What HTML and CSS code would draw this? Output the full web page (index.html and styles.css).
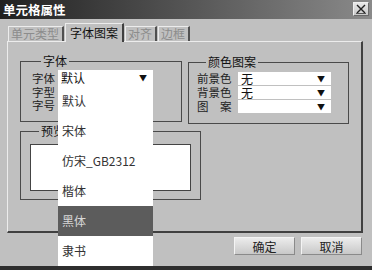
FILE: index.html
```html
<!DOCTYPE html>
<html lang="zh-CN">
<head>
  <meta charset="UTF-8">
  <title>单元格属性</title>
  <link rel="stylesheet" href="styles.css">
</head>
<body>
  <div class="window">
    <div class="titlebar">
      <span class="title">单元格属性</span>
      <span class="close">
        <svg width="14" height="12" viewBox="0 0 14 12">
          <path d="M3 2 L11 10 M11 2 L3 10" stroke="#222" stroke-width="1.4" fill="none"/>
          <path d="M2 10.5 H12" stroke="#555" stroke-width="1"/>
        </svg>
      </span>
    </div>

    <div class="tabs">
      <div class="tab">单元类型</div>
      <div class="tab active">字体图案</div>
      <div class="tab">对齐</div>
      <div class="tab">边框</div>
    </div>

    <div class="panel">
      <div class="top-row">
        <fieldset class="group font-group">
          <legend>字体</legend>
          <div class="field first">
            <label>字体</label>
            <div class="select">默认<span class="arrow">▼</span>
              <ul class="dropdown">
                <li>默认</li>
                <li>宋体</li>
                <li>仿宋_GB2312</li>
                <li>楷体</li>
                <li class="selected">黑体</li>
                <li>隶书</li>
              </ul>
            </div>
          </div>
          <div class="field"><label>字型</label></div>
          <div class="field"><label>字号</label></div>
        </fieldset>

        <fieldset class="group color-group">
          <legend>颜色图案</legend>
          <div class="field">
            <label>前景色</label>
            <div class="select">无<span class="arrow">▼</span></div>
          </div>
          <div class="field">
            <label>背景色</label>
            <div class="select">无<span class="arrow">▼</span></div>
          </div>
          <div class="field">
            <label>图　案</label>
            <div class="select"><span class="arrow">▼</span></div>
          </div>
        </fieldset>
      </div>

      <fieldset class="group preview-group">
        <legend>预览</legend>
        <div class="preview-box"></div>
      </fieldset>
    </div>

    <div class="buttons">
      <button>确定</button>
      <button>取消</button>
    </div>
    <div class="bottom-edge"></div>
  </div>
</body>
</html>
```

FILE: styles.css
```css
body {
  margin: 0;
  font-family: "Noto Sans CJK SC", "Liberation Sans", sans-serif;
  font-size: 12px;
  color: #111;
}
.window {
  width: 372px;
  height: 270px;
  background-color: #c0c0c0;
  display: flex;
  flex-direction: column;
  overflow: hidden;
}
.titlebar {
  height: 19px;
  flex: none;
  display: flex;
  align-items: center;
  justify-content: space-between;
  padding: 0 3px 0 3px;
  background: linear-gradient(to right, #202020, #5a5a5a 55%, #8a8a8a);
  box-sizing: border-box;
}
.title {
  color: #fff;
  font-weight: bold;
  font-size: 12.5px;
  line-height: 19px;
}
.close {
  width: 16px;
  height: 14px;
  box-sizing: border-box;
  border: 1px solid #6a6a6a;
  border-top-color: #f0f0f0;
  border-left-color: #f0f0f0;
  background: linear-gradient(#e8e8e8, #c8c8c8);
  display: flex;
  align-items: center;
  justify-content: center;
  margin-top: -2px;
}
.tabs {
  height: 22px;
  flex: none;
  display: flex;
  align-items: flex-end;
  padding-left: 8px;
  position: relative;
  z-index: 1;
}
.tab {
  height: 14px;
  line-height: 14px;
  padding: 0 3px 0 2px;
  color: #8c8c8c;
  border-top: 1px solid #ececec;
  border-left: 1px solid #ececec;
  border-right: 2px solid #505050;
  margin-right: 1px;
}
.tab.active {
  height: 18px;
  line-height: 18px;
  color: #111;
  padding: 0 4px 0 4px;
  margin-bottom: -1px;
  background-color: #c0c0c0;
  border-right: 2px solid #404040;
}
.panel {
  width: 356px;
  height: 192px;
  flex: none;
  margin-left: 7px;
  box-sizing: border-box;
  border-top: 1px solid #ececec;
  border-left: 1px solid #ececec;
  border-right: 2px solid #404040;
  border-bottom: 2px solid #404040;
  padding: 12px 0 0 12px;
}
.top-row {
  display: flex;
  gap: 6px;
  align-items: flex-start;
}
.group {
  margin: 0;
  padding: 0;
  border: 1px solid #4a4a4a;
  box-sizing: border-box;
  min-width: 0;
}
.group legend {
  margin-left: 9px;
  padding: 0 2px;
  line-height: 14px;
  font-size: 12px;
}
.font-group {
  width: 162px;
  height: 68px;
  padding: 2px 0 0 11px;
}
.color-group {
  width: 161px;
  height: 69px;
  margin-top: 1px;
  padding: 2px 0 0 8px;
}
.field {
  display: flex;
  align-items: center;
  height: 13px;
  line-height: 12px;
}
.field label {
  font-size: 11.5px;
  line-height: 12px;
  color: #222;
}
.font-group .field.first {
  height: 15px;
}
.font-group label {
  width: 26px;
}
.color-group .field {
  height: 14px;
}
.color-group label {
  width: 41px;
}
.select {
  position: relative;
  background-color: #fff;
  box-sizing: border-box;
  height: 13px;
  line-height: 13px;
  padding-left: 3px;
}
.font-group .select {
  width: 95px;
  height: 15px;
  line-height: 15px;
}
.color-group .select {
  width: 93px;
}
.arrow {
  position: absolute;
  right: 6px;
  top: 0;
  font-size: 8px;
}
.dropdown {
  position: absolute;
  left: 0;
  top: 15px;
  width: 95px;
  height: 181px;
  margin: 0;
  padding: 1px 0 0 0;
  list-style: none;
  background-color: #fff;
  box-sizing: border-box;
  z-index: 5;
}
.dropdown li {
  height: 30px;
  line-height: 30px;
  padding-left: 4px;
  font-size: 12px;
  color: #333;
}
.dropdown li.selected {
  background-color: #5c5c5c;
  color: #d8d8d8;
}
.preview-group {
  width: 181px;
  height: 76px;
  padding: 6px 0 0 9px;
}
.preview-box {
  width: 161px;
  height: 47px;
  box-sizing: border-box;
  background-color: #fff;
  border: 1px solid #444;
}
.buttons {
  display: flex;
  justify-content: flex-end;
  gap: 6px;
  padding-right: 10px;
  margin-top: 4px;
}
.buttons button {
  width: 61px;
  height: 18px;
  padding: 0;
  font-family: inherit;
  font-size: 12px;
  color: #222;
  background: linear-gradient(#ececec, #c8c8c8);
  border: 1px solid #8a8a8a;
  border-top-color: #f4f4f4;
  border-left-color: #f4f4f4;
}
.bottom-edge {
  margin-top: auto;
  height: 4px;
  background-color: #2e2e2e;
  position: relative;
  z-index: 6;
}
```
